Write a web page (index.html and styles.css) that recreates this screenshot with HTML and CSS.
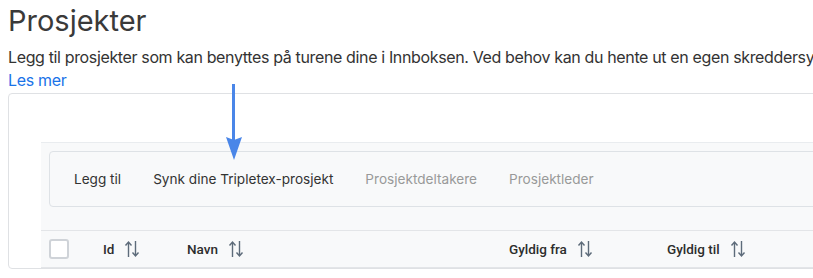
FILE: index.html
```html
<!DOCTYPE html>
<html lang="no">
<head>
<meta charset="utf-8">
<title>Prosjekter</title>
<link rel="stylesheet" href="styles.css">
</head>
<body>
<div class="page">
  <h1 class="title">Prosjekter</h1>
  <p class="desc">Legg til prosjekter som kan benyttes på turene dine i Innboksen. Ved behov kan du hente ut en egen skreddersydd rapport for prosjektene dine.</p>
  <a class="link" href="#">Les mer</a>
  <div class="card">
    <div class="panel">
      <div class="toolbar">
        <span class="tool">Legg til</span>
        <span class="tool">Synk dine Tripletex-prosjekt</span>
        <span class="tool disabled">Prosjektdeltakere</span>
        <span class="tool disabled">Prosjektleder</span>
      </div>
      <div class="thead">
        <div class="cell"><span class="checkbox"></span></div>
        <div class="cell">Id <svg class="sort" viewBox="0 0 16 18"><path d="M4.5 17V2M1.5 5.5L4.5 2L7.5 5.5M11.5 1V16M8.5 12.5L11.5 16L14.5 12.5"/></svg></div>
        <div class="cell">Navn <svg class="sort" viewBox="0 0 16 18"><path d="M4.5 17V2M1.5 5.5L4.5 2L7.5 5.5M11.5 1V16M8.5 12.5L11.5 16L14.5 12.5"/></svg></div>
        <div class="cell">Gyldig fra <svg class="sort" viewBox="0 0 16 18"><path d="M4.5 17V2M1.5 5.5L4.5 2L7.5 5.5M11.5 1V16M8.5 12.5L11.5 16L14.5 12.5"/></svg></div>
        <div class="cell">Gyldig til <svg class="sort" viewBox="0 0 16 18"><path d="M4.5 17V2M1.5 5.5L4.5 2L7.5 5.5M11.5 1V16M8.5 12.5L11.5 16L14.5 12.5"/></svg></div>
      </div>
    </div>
  </div>
  <svg class="pointer" viewBox="0 0 16 77"><rect x="6" y="0" width="3" height="58"/><path d="M0 53L8 76L16 53L8 56Z"/></svg>
</div>
</body>
</html>
```
FILE: styles.css
```css
html, body {
  margin: 0;
  padding: 0;
  background: #fff;
  overflow: hidden;
}
.page {
  position: relative;
  padding: 0 0 0 8px;
  font-family: Inter, "Noto Sans", sans-serif;
  color: #333;
  width: 1100px;
}
.title {
  margin: 0;
  padding-top: 4px;
  font-size: 29px;
  font-weight: 400;
  line-height: 33px;
  color: #3a3a3a;
}
.desc {
  margin: 9px 0 0;
  font-size: 16px;
  letter-spacing: -0.36px;
  line-height: 23px;
  white-space: nowrap;
  color: #333;
}
.link {
  display: block;
  font-size: 16px;
  letter-spacing: -0.3px;
  line-height: 23px;
  color: #1a73e8;
  text-decoration: none;
}
.card {
  margin-top: 1px;
  border: 1px solid #dfe1e4;
  border-radius: 4px;
  padding: 48px 0 0 32px;
  width: 1000px;
}
.panel {
  background: #f8f9fa;
  border-top: 1px solid #e9ecef;
  padding: 8px 0 0 8px;
}
.toolbar {
  display: flex;
  align-items: center;
  gap: 32px;
  height: 54px;
  padding-left: 24px;
  border: 1px solid #dee2e6;
  border-radius: 4px;
  font-size: 13.6px;
  color: #333;
}
.tool.disabled {
  color: #999;
}
.thead {
  display: grid;
  grid-template-columns: 54px 84px 322px 158px 1fr;
  align-items: center;
  height: 36px;
  margin: 23px 0 0 -8px;
  border-top: 1px solid #e3e5e8;
  border-bottom: 1px solid #e3e5e8;
  font-family: Roboto, Inter, sans-serif;
  font-size: 13.5px;
  font-weight: 500;
  color: #2d2d2d;
}
.cell {
  display: flex;
  align-items: center;
  gap: 10px;
  padding-left: 8px;
}
.checkbox {
  display: block;
  width: 16px;
  height: 16px;
  border: 2px solid #cfd3d8;
  border-radius: 3px;
  background: #fff;
}
.sort {
  width: 16px;
  height: 18px;
  fill: none;
  stroke: #5d6b7a;
  stroke-width: 1.4;
}
.pointer {
  position: absolute;
  left: 226px;
  top: 84px;
  width: 16px;
  height: 77px;
  fill: #4a86e8;
}
```
